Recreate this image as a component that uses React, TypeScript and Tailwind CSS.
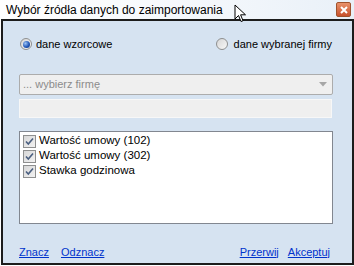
import * as React from 'react';

const items = ['Wartość umowy (102)', 'Wartość umowy (302)', 'Stawka godzinowa'];

function Radio({ checked }: { checked?: boolean }) {
  return (
    <span className="flex h-[12px] w-[12px] items-center justify-center rounded-full border border-[#8e8f8f] bg-gradient-to-br from-[#d6d6d6] to-[#f8f8f8]">
      {checked && (
        <span className="h-[7px] w-[7px] rounded-full bg-[radial-gradient(circle_at_35%_35%,#9cc4f5,#2358b8_55%,#0c2f73)]" />
      )}
    </span>
  );
}

function Check() {
  return (
    <span className="flex h-[13px] w-[13px] items-center justify-center border border-[#8e8f8f] bg-gradient-to-br from-[#d8d8d8] to-[#f2f2f2]">
      <svg width="9" height="9" viewBox="0 0 9 9">
        <path d="M1 4.5 L3.3 7 L8 1.5" fill="none" stroke="#4a5f80" strokeWidth="1.6" />
      </svg>
    </span>
  );
}

export default function App() {
  return (
    <div className="relative h-[266px] w-[354px] overflow-hidden bg-white font-['Liberation_Sans',Arial,sans-serif] text-[11px] text-black">
      {/* title bar */}
      <div className="flex h-[19px] items-center justify-between bg-gradient-to-r from-white via-[#f6f9fc] to-[#e9f0f8] pl-[6px] pr-[3px]">
        <span className="text-[12px] leading-none text-black">Wybór źródła danych do zaimportowania</span>
        <span className="flex h-[15px] w-[15px] items-center justify-center rounded-[2px] border border-[#a0522d] bg-gradient-to-b from-[#e8916a] to-[#c8502a]">
          <svg width="8" height="8" viewBox="0 0 8 8">
            <path d="M1 1 L7 7 M7 1 L1 7" stroke="white" strokeWidth="2" />
          </svg>
        </span>
      </div>

      {/* cursor */}
      <svg className="absolute left-[234px] top-[4px]" width="13" height="20" viewBox="0 0 13 20">
        <path d="M1 1 L1 15 L4.5 11.5 L7 17.5 L9 16.7 L6.6 10.8 L11.5 10.8 Z" fill="white" stroke="black" strokeWidth="1" />
      </svg>

      <div className="ml-[1px] flex h-[246px] w-[353px] flex-col border-2 border-[#1c1c1c] bg-[#d6e3f1] pl-[16px] pr-[19px]">
        <div className="mt-[15px] flex items-center justify-between">
          <label className="flex items-center gap-[4px] pl-[1px]">
            <Radio checked />
            <span>dane wzorcowe</span>
          </label>
          <label className="flex items-center gap-[6px] pr-[1px]">
            <Radio />
            <span>dane wybranej firmy</span>
          </label>
        </div>

        <div className="mt-[21px] flex h-[21px] items-center justify-between rounded-[2px] border border-[#acacac] bg-[#efefef] pl-[3px] pr-[5px]">
          <span className="text-[#8c8c8c]">... wybierz firmę</span>
          <svg width="8" height="5" viewBox="0 0 8 5">
            <path d="M0 0 L8 0 L4 4.5 Z" fill="#a6a6a6" />
          </svg>
        </div>

        <div className="mt-[4px] mr-[1px] h-[19px] border border-[#f7f7f7] bg-[#efefef]" />

        <div className="mt-[13px] flex h-[93px] flex-col border border-[#828790] bg-white pl-[3px] pt-[2px]">
          {items.map((t) => (
            <div key={t} className="flex h-[15px] items-center gap-[3px]">
              <Check />
              <span className="text-[11.5px]">{t}</span>
            </div>
          ))}
        </div>

        <div className="mt-[20px] flex items-center justify-between">
          <div className="flex gap-[12px]">
            <a className="cursor-pointer text-[#0033cc] underline">Znacz</a>
            <a className="cursor-pointer text-[#0033cc] underline">Odznacz</a>
          </div>
          <div className="flex gap-[9px] pr-[3px]">
            <a className="cursor-pointer text-[#0033cc] underline">Przerwij</a>
            <a className="cursor-pointer text-[#0033cc] underline">Akceptuj</a>
          </div>
        </div>
      </div>
    </div>
  );
}
